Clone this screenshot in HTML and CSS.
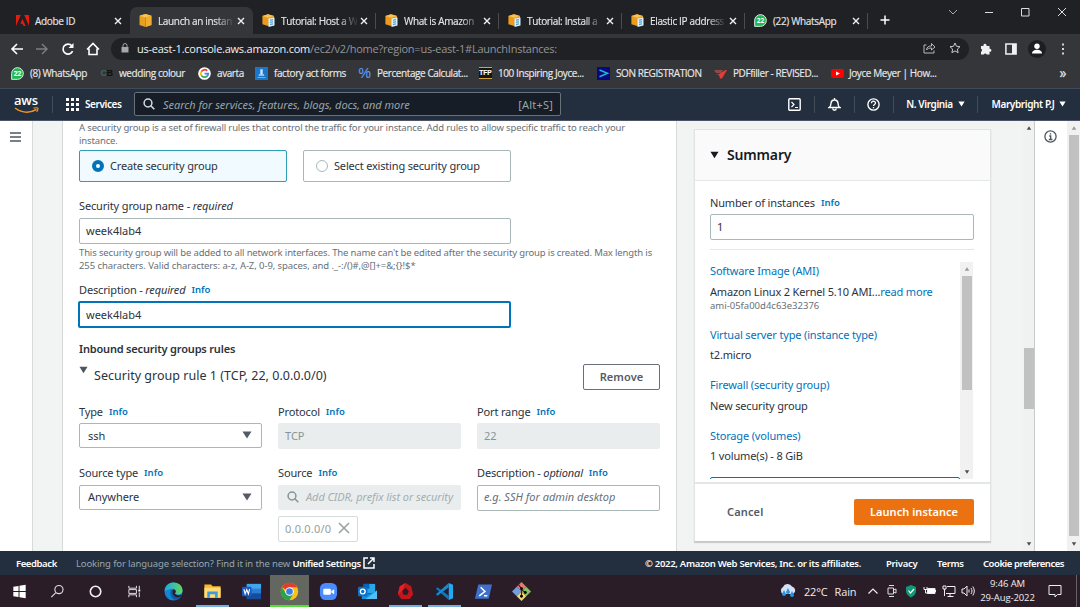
FILE: index.html
```html
<!DOCTYPE html>
<html lang="en">
<head>
<meta charset="utf-8">
<title>Launch an instance</title>
<link rel="stylesheet" href="styles.css">
</head>
<body>
<svg class="defs" width="0" height="0">
  <symbol id="cube" viewBox="0 0 12 12"><path d="M6 0l5.500 1.600v8.600L6 12 .5 10.200V1.600z" fill="#e8a020"/><path d="M6 0l5.500 1.600L6 3.200.5 1.600z" fill="#f9c556"/><path d="M6 3.200v8.800l5.500-1.800V1.600z" fill="#f2ad2c"/><path d="M6 3.200V12" stroke="#b87712" stroke-width=".6"/></symbol>
  <symbol id="cubedoc" viewBox="0 0 13 13"><path d="M6 .3l6 1.700v8L6 12 .4 10.200V2z" fill="#e89b1c"/><path d="M6 .3L12 2 6 3.800.4 2z" fill="#fbc250"/><path d="M6.500 4.500l6-1v8l-6 1.500z" fill="#d9f0fb"/><path d="M8 6.200l3-.5M8 8.300l3-.5M8 10.400l3-.5" stroke="#2e8cc4" stroke-width="1"/></symbol>
  <symbol id="wa" viewBox="0 0 14 14"><path d="M.7 13.300V6.800A6.300 6.300 0 1 1 7 13.300z" fill="#1fb855" stroke="#e7f7ec" stroke-width="1"/></symbol>
  <symbol id="x" viewBox="0 0 8 8"><path d="M1 1l6 6M7 1L1 7" stroke="currentColor" stroke-width="1.400"/></symbol>
  <symbol id="thinx" viewBox="0 0 12 12"><path d="M1 1l10 10M11 1L1 11" stroke="currentColor" stroke-width="1.500"/></symbol>
  <symbol id="down" viewBox="0 0 10 8"><path d="M.5.5h9L5 7.500z" fill="currentColor"/></symbol>
  <symbol id="search" viewBox="0 0 12 12"><circle cx="5" cy="5" r="3.900" fill="none" stroke="currentColor" stroke-width="1.500"/><path d="M7.800 7.800l3.500 3.500" stroke="currentColor" stroke-width="1.600"/></symbol>
</svg>

<header class="tabs">
  <div class="tab"><svg class="fav" viewBox="0 0 13 11"><path d="M0 0h4.800L0 11zM8.200 0H13v11zM6.500 4l3.200 7H7.500l-1-2.200H4.300z" fill="#e8190f"/></svg><span class="tab-title">Adobe ID</span><svg class="close"><use href="#x"/></svg></div>
  <div class="tab active"><svg class="fav"><use href="#cube"/></svg><span class="tab-title fade">Launch an instan</span><svg class="close"><use href="#x"/></svg></div>
  <div class="tab sep"><svg class="fav"><use href="#cubedoc"/></svg><span class="tab-title fade">Tutorial: Host a W</span><svg class="close"><use href="#x"/></svg></div>
  <div class="tab sep"><svg class="fav"><use href="#cubedoc"/></svg><span class="tab-title fade">What is Amazon</span><svg class="close"><use href="#x"/></svg></div>
  <div class="tab sep"><svg class="fav"><use href="#cubedoc"/></svg><span class="tab-title fade">Tutorial: Install a</span><svg class="close"><use href="#x"/></svg></div>
  <div class="tab sep"><svg class="fav"><use href="#cubedoc"/></svg><span class="tab-title fade">Elastic IP address</span><svg class="close"><use href="#x"/></svg></div>
  <div class="tab sep"><span class="wa-icon"><svg><use href="#wa"/></svg><b>22</b></span><span class="tab-title">(22) WhatsApp</span><svg class="close"><use href="#x"/></svg></div>
  <svg class="plus" viewBox="0 0 10 10"><path d="M5 .5v9M.5 5h9" stroke="#fff" stroke-width="1.500"/></svg>
  <div class="win">
    <svg viewBox="0 0 10 10"><path d="M1 3l4 4 4-4" fill="none" stroke="#aaa"/></svg>
    <svg viewBox="0 0 10 10"><path d="M1 5.500h8" stroke="#ddd"/></svg>
    <svg viewBox="0 0 10 10"><path d="M1.500 1.500h7.500v7.500H1.500z" fill="none" stroke="#ddd"/></svg>
    <svg viewBox="0 0 10 10"><path d="M1 1l8 8M9 1L1 9" stroke="#ddd"/></svg>
  </div>
</header>

<div class="toolbar">
  <div class="navbtns">
    <svg viewBox="0 0 14 14"><path d="M13 7H2M7 2L2 7l5 5" fill="none" stroke="#fff" stroke-width="1.600"/></svg>
    <svg viewBox="0 0 14 14"><path d="M1 7h11M7 2l5 5-5 5" fill="none" stroke="#7d7f83" stroke-width="1.400"/></svg>
    <svg viewBox="0 0 14 14"><path d="M11.600 9.200A5 5 0 1 1 10.800 3.700" fill="none" stroke="#fff" stroke-width="1.700"/><path d="M12.500 1v5h-5z" fill="#fff"/></svg>
    <svg viewBox="0 0 14 14"><path d="M1 7.500L7 1.500l6 6M3 6.500v6h8v-6" fill="none" stroke="#fff" stroke-width="1.600"/></svg>
  </div>
  <div class="url">
    <svg class="lock" viewBox="0 0 8 10"><path d="M.5 4h7v5.500h-7z" fill="#a5a7ab"/><path d="M2 4V2.500a2 2 0 0 1 4 0V4" fill="none" stroke="#a5a7ab"/></svg>
    <span class="url-text"><span class="host">us-east-1.console.aws.amazon.com</span>/ec2/v2/home?region=us-east-1#LaunchInstances:</span>
    <svg class="share" viewBox="0 0 13 12"><path d="M3.500 3H1v8h10V8.500" fill="none" stroke="#b5b7ba"/><path d="M3.500 8c.3-3 2-4 5-4V1.500L12 5 8.500 8V6c-2.500 0-3.800.5-5 2z" fill="none" stroke="#b5b7ba"/></svg>
    <svg class="star" viewBox="0 0 12 12"><path d="M6 1l1.500 3.300 3.500.4-2.600 2.400.7 3.600L6 8.900l-3.100 1.800.7-3.600L1 4.700l3.500-.4z" fill="none" stroke="#c8c9cc"/></svg>
  </div>
  <div class="ext">
    <svg viewBox="0 0 12 12"><path d="M1 3h2.500a1.600 1.600 0 1 1 3 0H9.500v2.800a1.500 1.500 0 1 1 0 2.900V11.500H6.700a1.600 1.600 0 0 0-3 0H1V8.700a1.600 1.600 0 0 0 0-3z" fill="#f1f1f2"/></svg>
    <svg viewBox="0 0 12 12"><path d="M.9.900h10.200v10.200H.9z" fill="none" stroke="#f1f1f2" stroke-width="1.500"/><path d="M7 1h4v10H7z" fill="#f1f1f2"/></svg>
    <svg class="avatar" viewBox="0 0 18 18"><circle cx="9" cy="9" r="9" fill="#1d1e21"/><circle cx="9" cy="6.200" r="2.700" fill="#fff"/><path d="M4 13.500c0-5 10-5 10 0z" fill="#fff"/></svg>
    <svg viewBox="0 0 12 12"><path d="M5 .5h2v2H5zM5 5h2v2H5zM5 9.500h2v2H5z" fill="#d4d4d6"/></svg>
  </div>
</div>

<div class="bookmarks">
  <div class="bm"><span class="wa-icon"><svg><use href="#wa"/></svg><b>22</b></span><span>(8) WhatsApp</span></div>
  <div class="bm"><span class="cb">C<i>B</i></span><span>wedding colour</span></div>
  <div class="bm"><svg viewBox="0 0 14 14"><circle cx="7" cy="7" r="6.800" fill="#fff"/><g fill="none" stroke-width="1.900"><path d="M9.900 4.100A4 4 0 0 0 3.600 5" stroke="#ea4335"/><path d="M3.600 5a4 4 0 0 0 0 4" stroke="#fbbc05"/><path d="M3.600 9a4 4 0 0 0 6.100 1" stroke="#34a853"/><path d="M9.700 10A4 4 0 0 0 11 7.200H7" stroke="#4285f4"/></g></svg><span>avarta</span></div>
  <div class="bm"><svg viewBox="0 0 13 13"><path d="M0 0h13v13H0z" fill="#1976c9"/><path d="M5.500 2.500h2v5h-2zM4 7.500h5v1H4zM2.500 10.500h8" fill="#d7ebfb" stroke="#9bc8ee" stroke-width=".7"/></svg><span>factory act forms</span></div>
  <div class="bm"><span class="pct">%</span><span>Percentage Calculat...</span></div>
  <div class="bm"><span class="tfp">TFP</span><span>100 Inspiring Joyce...</span></div>
  <div class="bm"><svg viewBox="0 0 13 13"><path d="M0 0h13v13H0z" fill="#08087c"/><path d="M2.500 3l8 3.300-8 3.500" fill="none" stroke="#26b2d0" stroke-width="1.500"/></svg><span>SON REGISTRATION</span></div>
  <div class="bm"><svg viewBox="0 0 13 13"><path d="M0 3h9L7 6H2zM2.500 7h4v2.500z" fill="#8e4a49"/><path d="M5 7l6.500-4H13L8 11.500H6z" fill="#e33d35"/></svg><span>PDFfiller - REVISED...</span></div>
  <div class="bm yt"><svg viewBox="0 0 13 13"><rect y="2" width="13" height="9" rx="2" fill="#f00"/><path d="M5 4.500l4 2-4 2z" fill="#fff"/></svg><span>Joyce Meyer | How...</span></div>
  <span class="more">»</span>
</div>

<nav class="aws">
  <div class="logo"><span>aws</span><svg viewBox="0 0 26 7"><path d="M1 1c7 5 15 5 21.500 1.500" fill="none" stroke="#f29422" stroke-width="1.500"/><path d="M19.500 1.200c3-.8 4.800-.4 4.500.6-.1 1-.6 2-1.300 3" fill="none" stroke="#f29422" stroke-width="1.200"/></svg></div>
  <div class="services"><svg viewBox="0 0 13 13"><path d="M0 0h3v3H0zM5 0h3v3H5zM10 0h3v3h-3zM0 5h3v3H0zM5 5h3v3H5zM10 5h3v3h-3zM0 10h3v3H0zM5 10h3v3H5zM10 10h3v3h-3z" fill="#fff"/></svg><span>Services</span></div>
  <div class="find"><svg><use href="#search"/></svg><em>Search for services, features, blogs, docs, and more</em><span>[Alt+S]</span></div>
  <div class="cell c1"><svg viewBox="0 0 13 13"><rect x=".8" y=".8" width="11.400" height="11.400" rx="1" fill="none" stroke="#fff" stroke-width="1.400"/><path d="M3.500 4l2.500 2.500L3.500 9M7 9.500h3" fill="none" stroke="#fff" stroke-width="1.200"/></svg></div>
  <div class="cell c2"><svg viewBox="0 0 13 13"><path d="M1 9.500c2-1.200 2-3 2-4.300A3.400 3.400 0 0 1 6.500 2 3.400 3.400 0 0 1 10 5.200c0 1.300 0 3.100 2 4.300zM6.500 0v2M4.800 10.500a1.700 1.700 0 0 0 3.400 0" fill="none" stroke="#fff" stroke-width="1.400"/></svg></div>
  <div class="cell c3"><svg viewBox="0 0 13 13"><circle cx="6.500" cy="6.500" r="5.600" fill="none" stroke="#fff" stroke-width="1.400"/><path d="M4.500 5.200c0-2.700 4-2.600 4-.2 0 1.500-2 1.400-2 3M6.500 9v1.300" fill="none" stroke="#fff" stroke-width="1.300"/></svg></div>
  <div class="cell c4"><span>N. Virginia</span><svg class="tri"><use href="#down"/></svg></div>
  <div class="cell c5"><span>Marybright P.J</span><svg class="tri"><use href="#down"/></svg></div>
</nav>

<main class="content">
  <aside class="rail"><svg viewBox="0 0 11 10"><path d="M0 1h11M0 5h11M0 9h11" stroke="#4c5661" stroke-width="1.400"/></svg></aside>
  <section class="form">
    <p class="hint intro"><span>A security group is a set of firewall rules that control the traffic for your instance. Add rules to allow specific traffic to reach your</span><br><span>instance.</span></p>
    <div class="tiles">
      <div class="tile on"><i class="radio"></i><span>Create security group</span></div>
      <div class="tile"><i class="radio"></i><span>Select existing security group</span></div>
    </div>
    <div class="label first"><span>Security group name - <em>required</em></span></div>
    <div class="input wide">week4lab4</div>
    <p class="hint under"><span>This security group will be added to all network interfaces. The name can't be edited after the security group is created. Max length is</span><br><span class="chars">255 characters. Valid characters: a-z, A-Z, 0-9, spaces, and ._-:/()#,@[]+=&amp;;{}!$*</span></p>
    <div class="label"><span>Description - <em>required</em></span><b class="info">Info</b></div>
    <div class="input wide focus">week4lab4</div>
    <h3>Inbound security groups rules</h3>
    <div class="rule">
      <svg><use href="#down"/></svg><span>Security group rule 1 (TCP, 22, 0.0.0.0/0)</span><button class="remove">Remove</button>
    </div>
    <div class="fields">
      <div><div class="label"><span>Type</span><b class="info">Info</b></div><div class="select"><span>ssh</span><svg><use href="#down"/></svg></div></div>
      <div><div class="label"><span>Protocol</span><b class="info">Info</b></div><div class="input off">TCP</div></div>
      <div><div class="label"><span>Port range</span><b class="info">Info</b></div><div class="input off">22</div></div>
      <div><div class="label"><span>Source type</span><b class="info">Info</b></div><div class="select"><span>Anywhere</span><svg><use href="#down"/></svg></div></div>
      <div><div class="label"><span>Source</span><b class="info">Info</b></div><div class="input off cidr"><svg><use href="#search"/></svg><em>Add CIDR, prefix list or security</em></div><div class="token"><span>0.0.0.0/0</span><svg><use href="#thinx"/></svg></div></div>
      <div><div class="label"><span>Description - <em>optional</em></span><b class="info">Info</b></div><div class="input ph"><em>e.g. SSH for admin desktop</em></div></div>
    </div>
  </section>
  <section class="side">
    <div class="card">
      <div class="card-head"><svg><use href="#down"/></svg><span>Summary</span></div>
      <div class="card-body">
        <div class="label"><span>Number of instances</span><b class="info">Info</b></div>
        <div class="input">1</div>
        <div class="scroll">
          <div class="list">
            <a>Software Image (AMI)</a>
            <p class="ami">Amazon Linux 2 Kernel 5.10 AMI...<a>read more</a></p>
            <small>ami-05fa00d4c63e32376</small>
            <a>Virtual server type (instance type)</a>
            <p>t2.micro</p>
            <a>Firewall (security group)</a>
            <p>New security group</p>
            <a>Storage (volumes)</a>
            <p>1 volume(s) - 8 GiB</p>
            <div class="notice"></div>
          </div>
          <div class="bar inner"><svg class="up"><use href="#down"/></svg><i></i><svg><use href="#down"/></svg></div>
        </div>
      </div>
      <div class="card-foot"><span class="cancel">Cancel</span><button class="launch">Launch instance</button></div>
    </div>
  </section>
  <div class="bar mid"><svg class="up"><use href="#down"/></svg><i></i><svg><use href="#down"/></svg></div>
  <aside class="rail right"><svg viewBox="0 0 13 13"><circle cx="6.500" cy="6.500" r="5.600" fill="none" stroke="#4c5661" stroke-width="1.300"/><path d="M5.200 6h1.500v3.500M4.800 9.500h3.600M5.800 3.800h1.400" fill="none" stroke="#4c5661" stroke-width="1.300"/></svg></aside>
  <div class="bar outer"><svg class="up"><use href="#down"/></svg><i></i><svg><use href="#down"/></svg></div>
</main>

<footer class="foot">
  <b class="f1">Feedback</b><span class="f2">Looking for language selection? Find it in the new <b>Unified Settings</b></span>
  <svg viewBox="0 0 12 12"><path d="M5 1H1v10h10V7M7 1h4v4M11 1L5 7" fill="none" stroke="#fff" stroke-width="1.500"/></svg>
  <b class="f3">© 2022, Amazon Web Services, Inc. or its affiliates.</b><b class="f4">Privacy</b><b class="f5">Terms</b><b class="f6">Cookie preferences</b>
</footer>

<div class="taskbar">
  <div class="apps">
    <div><svg viewBox="0 0 20 20"><path d="M3.500 5l5.500-.8v5.300H3.500zM10 4l6.500-1v6.500H10zM3.500 10.500H9v5.200L3.500 15zM10 10.500h6.500V17L10 16z" fill="#fff"/></svg></div>
    <div><svg viewBox="0 0 20 20"><circle cx="11.500" cy="8" r="4.300" fill="none" stroke="#ddd" stroke-width="1.200"/><path d="M8.300 11.200L3.500 16" stroke="#ddd" stroke-width="1.200"/></svg></div>
    <div><svg viewBox="0 0 20 20"><circle cx="9" cy="10" r="5.500" fill="none" stroke="#eee" stroke-width="1.700"/></svg></div>
    <div><svg viewBox="0 0 20 20"><path d="M3 4v2.500h8V4M3 16v-2.500h8V16M3 8h8v4H3zM14 4v4M14 11v5" fill="none" stroke="#e5e5e5"/><path d="M13 8h2v2h-2z" fill="#fff"/></svg></div>
    <div><svg viewBox="0 0 20 20"><defs><linearGradient id="eg"><stop stop-color="#1ca6e8"/><stop offset="1" stop-color="#62d956"/></linearGradient></defs><circle cx="10" cy="10" r="9.500" fill="#1583d6"/><path d="M.6 9C2-3 20-1.500 19.500 9.500c-.3 4-6 4.500-8 2.500 2-2 .5-5-2.500-5-4 0-7 3-8.400 2z" fill="url(#eg)"/><path d="M8 8c-3 4-.5 10.500 5 11A9 9 0 0 0 18 15c-4 1.500-9 0-9-4 0-1 .5-2 1-2.500z" fill="#1359a5"/><path d="M11.500 12c2-2 .5-4-1.500-4-1.500 1-1.500 5 1 7 2 1.500 5 1 7 0l1-2c-3 1.500-6 1-7.500-1z" fill="#2a1d28"/></svg></div>
    <div class="run"><svg viewBox="0 0 20 20"><path d="M1.500 2.500h7L10 4.500h8.500v12h-17z" fill="#f9b92b"/><path d="M1.500 6h17v10.500h-17z" fill="#ffdc78"/><path d="M4.500 16.500V10h11v6.500h-2.800V13H7.300v3.500z" fill="#3c9adf"/></svg></div>
    <div><svg viewBox="0 0 20 20"><path d="M5 2h15v16H5z" fill="#2b7cd3"/><path d="M5 2h15v5H5z" fill="#41a5ee"/><path d="M5 12h15v6H5z" fill="#174b9b"/><rect y="5" width="10" height="10" rx="1" fill="#185abd"/><path d="M2 7.500l1.300 5L5 8l1.700 4.500L8 7.500" fill="none" stroke="#fff" stroke-width="1.200"/></svg></div>
    <div class="cur"><svg viewBox="0 0 20 20"><circle cx="10" cy="10" r="9.200" fill="#fbc116"/><path d="M10 10L2 5.400A9.200 9.200 0 0 1 18 5.500H10z" fill="#e33b2e"/><path d="M2 5.400A9.200 9.200 0 0 0 10 19.200L14 12l-8-.5z" fill="#2ba24c"/><circle cx="10" cy="10" r="4.500" fill="#fff"/><circle cx="10" cy="10" r="3.500" fill="#3c7de6"/></svg></div>
    <div><svg viewBox="0 0 20 20"><rect x="1" y="1" width="18" height="18" rx="6" fill="#4a8cff"/><rect x="4.500" y="7" width="8" height="6.500" rx="1.300" fill="#fff"/><path d="M13 9.500L16 7.500v5.500l-3-2z" fill="#fff"/></svg></div>
    <div><svg viewBox="0 0 20 20"><path d="M6 2h12v10H6z" fill="#28a8ea"/><path d="M6 2h6v5H6z" fill="#0364b8"/><path d="M4 9l8 4 8-4v9H4z" fill="#1490df"/><path d="M8 18l12-9v9z" fill="#50bdf5"/><rect y="5" width="10" height="10" rx="1" fill="#0f6fc6"/><circle cx="5" cy="10" r="2.500" fill="none" stroke="#fff" stroke-width="1.400"/></svg></div>
    <div class="run"><svg viewBox="0 0 20 20"><path d="M10 1l6 3.500 2 8.500-3.500 5h-9L2 13l2-8.500z" fill="#c3161c"/><path d="M10 1L4 4.500 2 13l5-4z" fill="#e32128"/><path d="M10 6l3.500 3.500L12 13.500H8L6.500 9.500z" fill="#2a1d28"/></svg></div>
    <div class="run"><svg viewBox="0 0 20 20"><path d="M14.500 1L19 3v14l-4.500 2z" fill="#23a8f2"/><path d="M1 7l1.500-1.500L14.500 14.500V19z" fill="#0d77bd"/><path d="M1 13l1.500 1.500L14.500 5.500V1z" fill="#168bd0"/></svg></div>
    <div><svg viewBox="0 0 20 20"><path d="M4.500 2.500H19L15.500 17.500H1z" fill="#3e70cc"/><path d="M7 5.500l4.500 4.500-6 4.500M10.500 14.500H14" fill="none" stroke="#fff" stroke-width="1.600"/></svg></div>
    <div><svg viewBox="0 0 20 20"><path d="M10 0l5 5-5 5-5-5z" fill="#ee766d"/><path d="M5 5l5 5-5 5-5-5z" fill="#6e9fe8" transform="translate(0 0)"/><path d="M15 5l5 5-5 5-5-5z" fill="#7fc65b"/><path d="M10 10l5 5-5 5-5-5z" fill="#f3d768"/><path d="M7 3l3 4v9M10 8l4 3" fill="none" stroke="#33272c" stroke-width="1.200"/><circle cx="10" cy="7" r="1.500"/><circle cx="14" cy="11" r="1.500"/><circle cx="10" cy="15" r="1.500"/></svg></div>
  </div>
  <div class="weather"><svg viewBox="0 0 18 16"><path d="M4 11A4 4 0 0 1 4 4a5 5 0 0 1 9-.5A4 4 0 0 1 14 11z" fill="#d3e3f5"/><path d="M5 7l2 4a2 2 0 1 1-4 0zM13 8l2 4a2 2 0 1 1-4 0zM9 5l2 4a2 2 0 1 1-4 0z" fill="#2995e4"/></svg><span>22°C</span><span>Rain</span></div>
  <div class="tray">
    <svg viewBox="0 0 14 14"><path d="M2.500 9.500L7 5l4.500 4.500" fill="none" stroke="#eee" stroke-width="1.200"/></svg>
    <svg viewBox="0 0 14 14"><path d="M3 4h5.500v6H3zM8.500 6L11 5v4L8.500 8M4 1.500h5M4 12.500h5" fill="none" stroke="#ddd"/></svg>
    <svg viewBox="0 0 14 14"><path d="M7 1l5 2v4c0 3-2 5-5 6.500C4 12 2 10 2 7V3z" fill="#129778"/><path d="M4.500 6.500L6.500 9l3.500-4" fill="none" stroke="#fff" stroke-width="1.200"/></svg>
    <svg viewBox="0 0 14 14"><path d="M4.500 4.500H12v5H4.500zM12.500 6v2" fill="#fff" stroke="#eee"/><path d="M1 3v2.500h3V3M2.500 5v4H5" fill="none" stroke="#eee"/></svg>
    <svg viewBox="0 0 14 14"><path d="M5 2.500h8v7H4M8 9.500v3M5.500 12.500h6M1 2h3v3H1zM2.500 5v7" fill="none" stroke="#eee"/></svg>
    <svg viewBox="0 0 14 14"><path d="M1 5h2l3-3v10L3 9H1zM8 5.500v3M10 4c1.300 2 1.300 4 0 6M11.800 2.500c2 3 2 6 0 9" fill="none" stroke="#eee"/></svg>
  </div>
  <div class="clock"><span>9:46 AM</span><span>29-Aug-2022</span></div>
  <svg class="note" viewBox="0 0 14 14"><path d="M1 1.500h12v9H9.500L7 13V10.500H1z" fill="none" stroke="#eee"/></svg>
  <i class="peek"></i>
</div>
</body>
</html>
```
FILE: styles.css
```css
* { box-sizing: border-box; }
body {
  margin: 0;
  width: 1080px;
  height: 607px;
  overflow: hidden;
  display: flex;
  flex-direction: column;
  background: #fff;
  color: #2b333d;
  font: 11px "Noto Sans", "Open Sans", sans-serif;
  white-space: nowrap;
}
p, h3 { margin: 0; }
svg { flex: none; display: block; }
button { font: inherit; padding: 0; }
.defs { position: absolute; }

/* browser tabs */
.tabs { height: 34px; background: #202124; display: flex; padding: 7px 13.500px 0 7px; color: #e4e5e8; font: 10px "Open Sans", sans-serif; flex: none; }
.tab { width: 123px; height: 27px; display: flex; align-items: center; padding-left: 9px; position: relative; }
.tab.active { background: #35363a; border-radius: 7px 7px 0 0; }
.tab.sep::after { content: ""; position: absolute; right: 0; top: 6px; width: 1px; height: 16px; background: #4a4c50; }
.fav { width: 13px; height: 13px; margin-right: 6px; }
.tab-title { width: 76px; letter-spacing: -.35px; -webkit-text-stroke: .15px; }
.fade { -webkit-mask-image: linear-gradient(90deg, #000 75%, rgba(0,0,0,.15) 97%); mask-image: linear-gradient(90deg, #000 75%, rgba(0,0,0,.15) 97%); }
.close { width: 8px; height: 8px; margin-left: 3px; color: #f0f0f0; }
.plus { width: 10px; height: 10px; margin: 8px 0 0 12px; }
.win { display: flex; gap: 26.300px; margin: 0 0 0 auto; }
.win svg { width: 10px; height: 10px; }
.wa-icon { width: 13px; height: 13px; margin-right: 6px; display: grid; flex: none; }
.wa-icon > * { grid-area: 1/1; width: 13px; height: 13px; }
.wa-icon b { font-size: 6.500px; line-height: 13px; text-align: center; color: #fff; letter-spacing: 0; }

/* toolbar */
.toolbar { height: 28px; background: #35363a; display: flex; align-items: center; padding: 1px 9px 0 10px; flex: none; }
.navbtns { display: flex; gap: 11.400px; width: 101px; }
.navbtns svg { width: 14px; height: 14px; }
.url { width: 858px; height: 22px; border-radius: 11px; background: #202124; display: flex; align-items: center; padding: 0 8px 1px 10px; color: #92959a; font: 11px "Open Sans", sans-serif; }
.lock { width: 8px; height: 10px; margin-right: 8px; }
.url-text { letter-spacing: -.24px; }
.host { color: #f2f2f3; }
.share { width: 13px; height: 12px; margin-left: auto; margin-right: 13px; }
.star { width: 12px; height: 12px; }
.ext { display: flex; align-items: center; margin-left: 11px; gap: 13px; }
.ext svg { width: 12px; height: 12px; }
.ext .avatar { width: 18px; height: 18px; margin: 0 -2px; }

/* bookmarks */
.bookmarks { height: 26px; background: #35363a; display: grid; grid-template-columns: 89px 98px 57px 103px 121px 118px 117px 117px 120px 1fr; align-items: center; padding: 0 14px 4px 11px; color: #e8e9eb; font: 10px "Open Sans", sans-serif; flex: none; letter-spacing: -.42px; -webkit-text-stroke: .15px; }
.bm { display: flex; align-items: center; }
.bm > svg { width: 13px; height: 13px; margin-right: 6px; }
.bm.yt > svg { margin-right: 5px; }
.cb, .pct, .tfp { width: 13px; margin-right: 6px; text-align: center; flex: none; }
.cb { font: bold 9px "Liberation Sans", sans-serif; color: #3c6468; }
.cb i { font-style: normal; color: #111; }
.pct { color: #5c9bf5; font: 14px/14px "Liberation Sans", sans-serif; }
.tfp { background: #151515; color: #fff; border: solid #cfa63a; border-width: 1px 0; font: bold 6.500px/10px "Liberation Sans", sans-serif; letter-spacing: 0; }
.more { text-align: right; font-size: 14px; line-height: 12px; }

/* console navigation */
.aws { height: 33px; background: #232f3e; border-top: 1px solid #3f4b59; border-bottom: 1px solid #4c5565; display: flex; align-items: center; color: #fff; font-weight: 600; font-size: 10px; letter-spacing: -.4px; flex: none; padding-bottom: 1px; }
.logo { width: 53px; height: 17px; padding-left: 14px; border-right: 1px solid #414c59; font: 600 13px/9px "Open Sans", sans-serif; }
.logo span { display: block; letter-spacing: -.2px; }
.logo svg { width: 26px; height: 7px; margin-top: 2px; }
.services { display: flex; align-items: center; gap: 6px; width: 81px; padding-left: 13px; }
.services svg { width: 13px; height: 13px; }
.find { width: 427px; height: 24px; border: 1px solid #687078; border-radius: 2px; background: #161d26; display: flex; align-items: center; padding: 0 7px 0 8px; font-weight: 400; font-size: 11px; color: #98a4a9; letter-spacing: -.04px; }
.find svg { width: 12px; height: 12px; margin-right: 8px; color: #d6dbdf; }
.find span { margin-left: auto; letter-spacing: .2px; }
.cell { height: 17px; display: flex; align-items: center; justify-content: center; border-right: 1px solid #414c59; }
.cell svg { width: 13px; height: 13px; }
.cell .tri { width: 7px; height: 6px; margin-left: 5px; }
.c1 { width: 40px; margin-left: 214px; }
.c2, .c3 { width: 39.500px; }
.c4 { width: 84px; }
.c5 { width: 102px; border: 0; }

/* content shell */
.content { height: 430px; display: flex; background: #f2f3f3; flex: none; overflow: hidden; }
.rail { width: 33px; background: #fff; border-right: 1px solid #d5dbdb; padding: 11px 0 0 10px; }
.rail svg { width: 11px; height: 10px; }
.right { border-right: 0; border-left: 1px solid #c5cbcb; padding-left: 9px; padding-top: 9px; }
.right svg { width: 13px; height: 13px; }
.form { width: 615px; margin-left: 29px; background: #fff; border: solid #d5dbdb; border-width: 0 1px; padding: 1px 16px 0; }
.hint { font-size: 9.500px; line-height: 12.500px; color: #687078; letter-spacing: -.145px; }
.chars { letter-spacing: -.08px; }
.tiles { display: flex; gap: 16px; margin-top: 3px; }
.tile { width: 208px; height: 32px; border: 1px solid #aab7b8; border-radius: 2px; display: flex; align-items: center; padding: 0 0 1px 12px; font-size: 11px; letter-spacing: -.18px; }
.tile span { margin-top: -1px; }
.tile.on { background: #f1faff; border-color: #2c9db5; }
.radio { width: 12px; height: 12px; border: 1px solid #aab7b8; border-radius: 50%; margin-right: 6px; background: #fff; }
.on .radio { border: 4px solid #0073bb; }
.label { display: flex; align-items: center; height: 16px; font-size: 11px; letter-spacing: -.15px; padding-bottom: 2px; }
.info { color: #0073bb; font-size: 9.500px; margin-left: 6px; font-weight: 600; letter-spacing: 0; }
.label.first { margin-top: 16px; }
.input { height: 26px; border: 1px solid #aab7b8; border-radius: 2px; display: flex; align-items: center; padding: 0 6px 2px; font-size: 11px; background: #fff; margin-top: 4px; }
.wide { width: 432px; }
.focus { width: 433px; height: 27px; margin: 3px 0 0 -1px; border: 2px solid #0073bb; padding-bottom: 1px; }
.under { margin: 3px 0 10px; }
h3 { font-size: 11px; line-height: 16px; margin-top: 13px; font-weight: 600; letter-spacing: -.18px; }
.rule { display: flex; align-items: center; height: 26px; margin-top: 7px; font-size: 12.500px; }
.rule svg { width: 9px; height: 8px; margin: -14px 6px 0 0; color: #4c5661; }
.rule span { margin-top: -3px; letter-spacing: .02px; }
.remove { width: 77px; height: 26px; margin-left: auto; background: #fff; border: 1px solid #687078; border-radius: 2px; font: 600 11px "Noto Sans", sans-serif; color: #545b64; letter-spacing: .1px; padding-bottom: 2px; }
.fields { display: grid; grid-template-columns: 183px 183px 183px; column-gap: 16px; row-gap: 15.500px; margin-top: 14px; }
.fields > div { height: 46px; }
.select { height: 25px; margin-top: 3px; border: 1px solid #aab7b8; border-radius: 2px; display: flex; align-items: center; justify-content: space-between; padding: 0 9px 1px 8px; letter-spacing: -.05px; }
.select svg { width: 10px; height: 8px; color: #545b64; }
.fields .input { margin-top: 3px; }
.off { background: #eaeded; border-color: #eaeded; color: #879596; }
.fields .cidr { height: 25px; padding-bottom: 1px; }
.cidr svg { width: 12px; height: 12px; margin: 0 7px 0 2px; }
.cidr em { width: 148px; color: #a3afb0; letter-spacing: -.08px; }
.token { width: 80px; height: 26px; margin-top: 6px; border: 1px solid #d5dbdb; border-radius: 2px; display: flex; align-items: center; gap: 7px; padding: 0 0 1px 6px; color: #95a0a1; letter-spacing: .2px; }
.token svg { width: 12px; height: 12px; }
.ph { color: #687078; }

/* summary */
.side { width: 346px; padding: 8px 0 0 17px; letter-spacing: -.16px; }
.card { width: 297px; height: 413px; background: #fff; border: 1px solid #dfe3e3; border-bottom-color: #c3c8c8; box-shadow: 0 1px 1px #ccc; display: flex; flex-direction: column; }
.card-head { height: 51px; background: #fafafa; border-bottom: 1px solid #e3e7e7; display: flex; align-items: center; padding: 0 0 1px 15px; font-size: 14px; font-weight: 600; color: #16191f; }
.card-head svg { width: 9px; height: 8px; margin-right: 8px; }
.card-body { padding: 14px 16px 0 15px; height: 301px; }
.card-body .input { margin-top: 3px; }
.scroll { margin-top: 9px; border-top: 1px solid #e3e7e7; padding-top: 12px; display: flex; height: 230px; }
.list { width: 250px; overflow: hidden; display: flex; flex-direction: column; }
.list a { color: #0073bb; line-height: 17px; }
.list p { line-height: 17px; margin: 3.500px 0 13px; }
.list .ami { margin-bottom: 0; }
.list small { font-size: 9.500px; line-height: 12px; color: #687078; margin-bottom: 14px; letter-spacing: 0; }
.notice { height: 10px; flex: none; border: 1px solid #0073bb; border-radius: 2px; }
.bar { display: flex; flex-direction: column; align-items: center; background: #f1f1f1; }
.bar svg { width: 6px; height: 4px; color: #4d4d4d; margin: 0 0 5px; }
.bar .up { transform: rotate(180deg); margin: 5px 0; }
.bar i { background: #c1c1c1; width: 10px; margin-bottom: auto; }
.inner { width: 13px; height: 217px; }
.inner i { height: 114px; }
.inner .up { color: #999; }
.card-foot { flex: 1; border-top: 2px solid #e3e7e7; display: flex; align-items: center; justify-content: space-between; padding: 0 16px 1px 32px; font-weight: 600; color: #545b64; letter-spacing: .15px; }
.cancel { margin-top: -2px; }
.launch { width: 120px; height: 26px; border: 0; border-radius: 2px; background: #ec7211; color: #fff; font-weight: 600; letter-spacing: .05px; padding-bottom: 1px; }
.mid { width: 11px; }
.mid i { height: 61px; margin-top: 213px; }
.outer { width: 13px; }
.outer i { height: 401px; }
.outer .up { color: #999; }

/* console footer */
.foot { height: 24px; background: #232f3e; display: flex; align-items: center; padding-left: 16px; color: #fff; font-size: 9.500px; flex: none; letter-spacing: -.3px; }
.foot b { font-weight: 600; }
.f1 { width: 60px; letter-spacing: -.4px; }
.f2 { color: #98a5ae; letter-spacing: -.13px; }
.f2 b { color: #fff; letter-spacing: -.35px; }
.foot svg { width: 12px; height: 12px; margin-left: 2px; }
.f3 { margin-left: auto; width: 241px; }
.f4 { width: 51px; }
.f5 { width: 46px; }
.f6 { width: 97px; letter-spacing: -.45px; }

/* taskbar */
.taskbar { height: 32px; background: #2a1d28; display: flex; color: #f0edf0; font: 11px "Open Sans", sans-serif; flex: none; }
.apps { display: grid; grid-template-columns: repeat(14, 38.650px); }
.apps > div { display: flex; justify-content: center; align-items: center; }
.apps svg { width: 19px; height: 19px; }
.run { box-shadow: inset 0 -2px #76aee0; margin: 0 3px; }
.cur { background: #646660; box-shadow: inset 0 -2px #4fe033; }
.weather { display: flex; align-items: center; margin-left: 238px; width: 87px; }
.weather svg { width: 18px; height: 16px; margin-right: 7px; }
.weather span { margin-right: 7px; letter-spacing: -.15px; }
.tray { display: flex; align-items: center; gap: 5px; }
.tray svg { width: 14px; height: 14px; }
.clock { display: flex; flex-direction: column; align-items: center; justify-content: center; width: 65px; font-size: 9.500px; line-height: 14.500px; letter-spacing: -.1px; }
.note { width: 14px; height: 14px; margin: 9px 0 0 8px; }
.peek { width: 1px; background: #6a606a; margin-left: auto; margin-right: 3px; }
```
